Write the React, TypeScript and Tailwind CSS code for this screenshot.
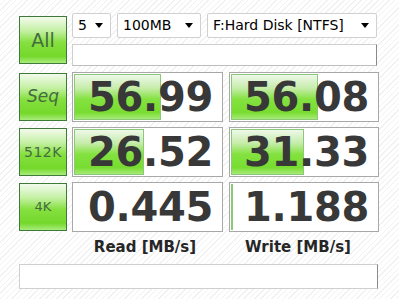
import React from 'react';

const btn =
    "w-[48px] h-[48px] border border-[#3f7a3a] bg-[linear-gradient(180deg,#f2fbec_0%,#c4f0a4_30%,#86e040_55%,#74d82a_85%,#a8ec7c_100%)] flex items-center justify-center font-['DejaVu_Sans',sans-serif]";

const bar =
    'h-full border border-[#8cc878] bg-[linear-gradient(180deg,#eef8ea_0%,#c6ecaa_30%,#84e240_55%,#78dc30_85%,#a6ea78_100%)]';

const Cell: React.FC<{ value: string; fill: number }> = ({ value, fill }) => (
    <div className="relative h-[50px] border border-[#a8a8a8] bg-white">
        <div className="absolute left-0 top-0 bottom-0 p-px" style={{ width: fill }}>
            {fill > 0 && <div className={bar} />}
        </div>
        <div className="relative h-full flex items-center justify-end pr-[9px] text-[40px] leading-none font-bold text-[#383838] font-['DejaVu_Sans',sans-serif] tracking-[-0.3px]">
            {value}
        </div>
    </div>
);

const Combo: React.FC<{ text: string; w: string }> = ({ text, w }) => (
    <div className={`${w} h-[25px] border border-[#d0d0d0] rounded-[2px] bg-white flex items-center justify-between pl-[5px] pr-[7px] text-[14px] text-black font-['DejaVu_Sans',sans-serif]`}>
        <span>{text}</span>
        <span className="w-0 h-0 border-l-[4px] border-r-[4px] border-t-[5px] border-l-transparent border-r-transparent border-t-black" />
    </div>
);

const Label: React.FC<{ text: string; cls: string }> = ({ text, cls }) => (
    <span className={`text-[#446c3e] ${cls}`}>{text}</span>
);

const Row: React.FC<{ label: string; read: string; rf: number; write: string; wf: number; size: string }> = ({ label, read, rf, write, wf, size }) => (
    <div className="flex items-center gap-[5px] h-[50px]">
        <div className={btn}>
            <Label text={label} cls={size} />
        </div>
        <div className="w-[151px]">
            <Cell value={read} fill={rf} />
        </div>
        <div className="w-[150px] ml-px">
            <Cell value={write} fill={wf} />
        </div>
    </div>
);

const App: React.FC = () => {
    return (
        <div className="w-[399px] h-[299px] overflow-hidden bg-[repeating-linear-gradient(135deg,#ffffff_0px,#ffffff_3px,#f1f1f1_3px,#f1f1f1_4px)] pl-[19px] pt-[13px]">
            <div className="flex gap-[5px]">
                <div className={`${btn} mt-[3px]`}>
                    <Label text="All" cls="text-[19px]" />
                </div>
                <div className="w-[305px] flex flex-col">
                    <div className="flex gap-[6px]">
                        <Combo text="5" w="w-[39px]" />
                        <Combo text="100MB" w="w-[84px]" />
                        <Combo text="F:Hard Disk [NTFS]" w="w-[170px]" />
                    </div>
                    <div className="mt-[6px] h-[22px] border border-[#cfcfcf] border-r-[#8a8a8a] border-b-[#bdbdbd] bg-white" />
                </div>
            </div>
            <div className="mt-[6px] flex flex-col gap-[5px]">
                <Row label="Seq" read="56.99" rf={89} write="56.08" wf={89} size="text-[17px] italic" />
                <Row label="512K" read="26.52" rf={72} write="31.33" wf={75} size="text-[14px] tracking-[0.5px]" />
                <Row label="4K" read="0.445" rf={0} write="1.188" wf={3} size="text-[13px]" />
            </div>
            <div className="flex h-[26px] pt-[5px] items-center text-[15px] font-bold text-[#262626] font-['DejaVu_Sans',sans-serif]">
                <div className="w-[48px]" />
                <div className="w-[156px] text-center">Read [MB/s]</div>
                <div className="w-[150px] text-center">Write [MB/s]</div>
            </div>
            <div className="mt-[6px] w-[359px] h-[25px] border border-[#cfcfcf] border-r-[#8a8a8a] bg-white" />
        </div>
    );
};

export default App;
